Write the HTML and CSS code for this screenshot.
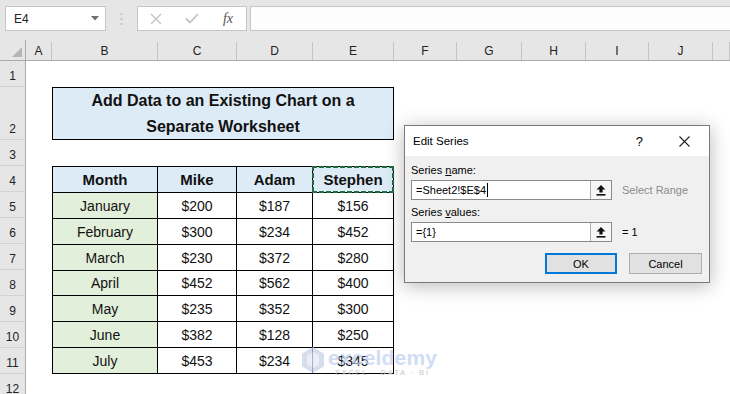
FILE: index.html
```html
<!DOCTYPE html>
<html lang="en">
<head>
    <meta charset="UTF-8">
    <title>Edit Series</title>
    <link rel="stylesheet" href="styles.css">
</head>
<body>
    <div class="topbar">
        <div class="namebox">
            <span>E4</span>
            <svg width="8" height="5" viewBox="0 0 8 5"><polygon points="0,0 8,0 4,4.5" fill="#6f6f6f"/></svg>
        </div>
        <div class="grip">
            <svg width="3" height="12" viewBox="0 0 3 12"><rect x="0.5" y="0" width="2" height="2" fill="#c4c4c4"/><rect x="0.5" y="5" width="2" height="2" fill="#c4c4c4"/><rect x="0.5" y="10" width="2" height="2" fill="#c4c4c4"/></svg>
        </div>
        <div class="fxtools">
            <span class="tool">
                <svg width="12" height="12" viewBox="0 0 12 12"><path d="M1 1 L11 11 M11 1 L1 11" stroke="#c2c2c2" stroke-width="1.3" fill="none"/></svg>
            </span>
            <span class="tool">
                <svg width="14" height="11" viewBox="0 0 14 11"><path d="M1 5.5 L5 9.5 L13 1" stroke="#c2c2c2" stroke-width="1.8" fill="none"/></svg>
            </span>
            <span class="tool fx">fx</span>
        </div>
        <div class="formula"></div>
    </div>

    <div class="colheads">
        <div class="corner">
            <svg width="10" height="10" viewBox="0 0 10 10"><polygon points="10,0 10,10 0,10" fill="#b5b5b5"/></svg>
        </div>
        <div class="ch">A</div>
        <div class="ch">B</div>
        <div class="ch">C</div>
        <div class="ch">D</div>
        <div class="ch">E</div>
        <div class="ch">F</div>
        <div class="ch">G</div>
        <div class="ch">H</div>
        <div class="ch">I</div>
        <div class="ch">J</div>
        <div class="ch"></div>
    </div>

    <div class="sheet">
        <div class="title">
            <span>Add Data to an Existing Chart on a</span>
            <span>Separate Worksheet</span>
        </div>

        <div class="data">
            <div class="c hd">Month</div>
            <div class="c hd">Mike</div>
            <div class="c hd">Adam</div>
            <div class="c hd sel">Stephen</div>

            <div class="c mo">January</div>
            <div class="c">$200</div>
            <div class="c">$187</div>
            <div class="c">$156</div>

            <div class="c mo">February</div>
            <div class="c">$300</div>
            <div class="c">$234</div>
            <div class="c">$452</div>

            <div class="c mo">March</div>
            <div class="c">$230</div>
            <div class="c">$372</div>
            <div class="c">$280</div>

            <div class="c mo">April</div>
            <div class="c">$452</div>
            <div class="c">$562</div>
            <div class="c">$400</div>

            <div class="c mo">May</div>
            <div class="c">$235</div>
            <div class="c">$352</div>
            <div class="c">$300</div>

            <div class="c mo">June</div>
            <div class="c">$382</div>
            <div class="c">$128</div>
            <div class="c">$250</div>

            <div class="c mo">July</div>
            <div class="c">$453</div>
            <div class="c">$234</div>
            <div class="c">$345</div>
        </div>

        <div class="rh">1</div>
        <div class="rh">2</div>
        <div class="rh">3</div>
        <div class="rh">4</div>
        <div class="rh">5</div>
        <div class="rh">6</div>
        <div class="rh">7</div>
        <div class="rh">8</div>
        <div class="rh">9</div>
        <div class="rh">10</div>
        <div class="rh">11</div>
        <div class="rh">12</div>
    </div>

    <!-- watermark -->
    <div class="watermark">
        <svg width="22" height="26" viewBox="0 0 22 26">
            <polygon points="11,0 22,6.5 22,19.5 11,26 0,19.5 0,6.5" fill="#c9d3e8"/>
            <polygon points="11,5 17,8.5 17,17.5 11,21 5,17.5 5,8.5" fill="#e3e9f5"/>
        </svg>
        <div class="wm-text">
            <span class="wm-name">exceldemy</span>
            <span class="wm-sub">EXCEL · DATA · BI</span>
        </div>
    </div>

    <div class="dialog">
        <div class="dlg-title">
            <span class="dlg-name">Edit Series</span>
            <span class="dlg-help">?</span>
            <svg class="dlg-close" width="11" height="11" viewBox="0 0 11 11"><path d="M0.5 0.5 L10.5 10.5 M10.5 0.5 L0.5 10.5" stroke="#222" stroke-width="1.1" fill="none"/></svg>
        </div>
        <div class="dlg-body">
            <div class="lbl lbl-first">Series <u>n</u>ame:</div>
            <div class="fieldrow">
                <div class="field">
                    <span class="val">=Sheet2!$E$4<span class="caret"></span></span>
                    <span class="pick">
                        <svg width="10" height="11" viewBox="0 0 10 11"><polygon points="5,0 9.5,4.5 6.6,4.5 6.6,7.5 3.4,7.5 3.4,4.5 0.5,4.5" fill="#111"/><rect x="0.5" y="9" width="9" height="1.6" fill="#111"/></svg>
                    </span>
                </div>
                <span class="hint muted">Select Range</span>
            </div>
            <div class="lbl">Series <u>v</u>alues:</div>
            <div class="fieldrow">
                <div class="field">
                    <span class="val">={1}</span>
                    <span class="pick">
                        <svg width="10" height="11" viewBox="0 0 10 11"><polygon points="5,0 9.5,4.5 6.6,4.5 6.6,7.5 3.4,7.5 3.4,4.5 0.5,4.5" fill="#111"/><rect x="0.5" y="9" width="9" height="1.6" fill="#111"/></svg>
                    </span>
                </div>
                <span class="hint">= 1</span>
            </div>
            <div class="buttons">
                <div class="btn btn-ok">OK</div>
                <div class="btn">Cancel</div>
            </div>
        </div>
    </div>
</body>
</html>
```

FILE: styles.css
```css
* {
    box-sizing: border-box;
}

body {
    margin: 0;
    width: 730px;
    height: 394px;
    overflow: hidden;
    background-color: #fff;
    font-family: "Liberation Sans", Arial, sans-serif;
    color: #111;
    position: relative;
}

/* formula bar */
.topbar {
    height: 40px;
    background-color: #e6e6e6;
    display: flex;
    align-items: flex-start;
    padding-top: 6px;
    padding-left: 5px;
}

.namebox {
    width: 101px;
    height: 25px;
    background-color: #fff;
    border: 1px solid #c6c6c6;
    display: flex;
    align-items: center;
    justify-content: space-between;
    padding: 0 6px 0 8px;
    font-size: 12px;
    color: #222;
}

.grip {
    width: 31px;
    display: flex;
    justify-content: center;
    padding-top: 7px;
}

.fxtools {
    width: 110px;
    height: 25px;
    background-color: #fff;
    border: 1px solid #c6c6c6;
    display: flex;
    align-items: center;
}

.tool {
    width: 36px;
    display: flex;
    justify-content: center;
    align-items: center;
}

.tool.fx {
    font-family: "Liberation Serif", serif;
    font-style: italic;
    font-size: 14px;
    color: #555;
}

.formula {
    flex: 1;
    margin-left: 3px;
    height: 25px;
    background-color: #fdfdfd;
    border: 1px solid #c6c6c6;
    border-right: none;
}

/* grid */
.colheads,
.sheet {
    display: grid;
    grid-template-columns: 26px 26px 106px 79px 76px 81px 63px 65px 64px 63px 64px 1fr;
}

.colheads {
    height: 21px;
    background-color: #e6e6e6;
    border-bottom: 1px solid #ababab;
}

.corner {
    border-right: 1px solid #ababab;
    display: flex;
    align-items: flex-end;
    justify-content: flex-end;
    padding: 0 3px 3px 0;
}

.ch {
    margin-top: 2px;
    border-right: 1px solid #c4c4c4;
    display: flex;
    align-items: center;
    justify-content: center;
    font-size: 12px;
    color: #222;
}

.sheet {
    height: 333px;
    overflow: hidden;
    grid-template-rows: 26px 53px repeat(11, 26px);
}

.rh {
    grid-column: 1;
    background-color: #e6e6e6;
    border-right: 1px solid #ababab;
    border-bottom: 1px solid #d2d2d2;
    display: flex;
    align-items: flex-end;
    justify-content: center;
    padding-bottom: 3px;
    font-size: 12px;
    color: #222;
}

.title {
    grid-column: 3 / 7;
    grid-row: 2;
    border: 1px solid #000;
    background-color: #ddebf7;
    display: flex;
    flex-direction: column;
    align-items: center;
    justify-content: center;
    font-weight: bold;
    font-size: 16px;
    line-height: 26px;
}

.data {
    grid-column: 3 / 7;
    grid-row: 4 / 12;
    display: grid;
    grid-template-columns: 105px 79px 76px 81px;
    grid-template-rows: repeat(8, 1fr);
    border-top: 1px solid #000;
    border-left: 1px solid #000;
}

.c {
    border-right: 1px solid #000;
    border-bottom: 1px solid #000;
    display: flex;
    align-items: center;
    justify-content: center;
    font-size: 14px;
    padding-top: 1px;
}

.c.hd {
    background-color: #ddebf7;
    font-weight: bold;
    font-size: 15px;
}

.c.mo {
    background-color: #e2efda;
}

.c.sel {
    position: relative;
}

.c.sel::after {
    content: "";
    position: absolute;
    top: -1px;
    left: -1px;
    right: -1px;
    bottom: -1px;
    background:
        repeating-linear-gradient(90deg, #1e6b40 0 5px, transparent 5px 7px) top left / 100% 2px no-repeat,
        repeating-linear-gradient(90deg, #1e6b40 0 5px, transparent 5px 7px) bottom left / 100% 2px no-repeat,
        repeating-linear-gradient(180deg, #1e6b40 0 5px, transparent 5px 7px) top left / 2px 100% no-repeat,
        repeating-linear-gradient(180deg, #1e6b40 0 5px, transparent 5px 7px) top right / 2px 100% no-repeat;
}

/* watermark */
.watermark {
    position: absolute;
    left: 302px;
    top: 347px;
    display: flex;
    gap: 4px;
    opacity: 0.75;
}

.wm-text {
    display: flex;
    flex-direction: column;
    align-items: center;
}

.wm-name {
    font-weight: bold;
    font-size: 21px;
    line-height: 21px;
    color: #c2d1f4;
    letter-spacing: 0.2px;
}

.wm-sub {
    font-size: 7px;
    letter-spacing: 2px;
    color: #c8c8c8;
    margin-top: 1px;
    font-weight: bold;
}

/* dialog */
.dialog {
    position: absolute;
    left: 404px;
    top: 125px;
    width: 306px;
    height: 158px;
    border: 1px solid #7a7a7a;
    background-color: #f0f0f0;
    box-shadow: 0 3px 18px rgba(0, 0, 0, 0.28);
    font-size: 11px;
    color: #000;
}

.dlg-title {
    height: 30px;
    background-color: #fff;
    display: flex;
    align-items: center;
    padding-left: 8px;
    font-size: 11.5px;
}

.dlg-name {
    flex: 1;
}

.dlg-help {
    font-size: 13px;
    margin-right: 36px;
}

.dlg-close {
    margin-right: 19px;
}

.dlg-body {
    padding: 0 7px 0 6px;
}

.lbl {
    line-height: 14px;
    margin-top: 5px;
}

.lbl-first {
    margin-top: 7px;
}

.fieldrow {
    display: flex;
    align-items: center;
    margin-top: 3px;
}

.field {
    width: 201px;
    height: 20px;
    background-color: #fff;
    border: 1px solid #8a8a8a;
    display: flex;
}

.val {
    flex: 1;
    display: flex;
    align-items: center;
    padding-left: 4px;
}

.caret {
    width: 1px;
    height: 14px;
    background-color: #000;
    margin-left: 1px;
}

.pick {
    width: 21px;
    border-left: 1px solid #adadad;
    background-color: #f7f7f7;
    display: flex;
    align-items: center;
    justify-content: center;
}

.hint {
    margin-left: 10px;
}

.hint.muted {
    color: #8c8c8c;
}

.buttons {
    display: flex;
    justify-content: flex-end;
    gap: 12px;
    margin-top: 11px;
}

.btn {
    width: 73px;
    height: 21px;
    background-color: #e1e1e1;
    border: 1px solid #adadad;
    display: flex;
    align-items: center;
    justify-content: center;
}

.btn-ok {
    width: 72px;
    border: 2px solid #0078d7;
}
```
